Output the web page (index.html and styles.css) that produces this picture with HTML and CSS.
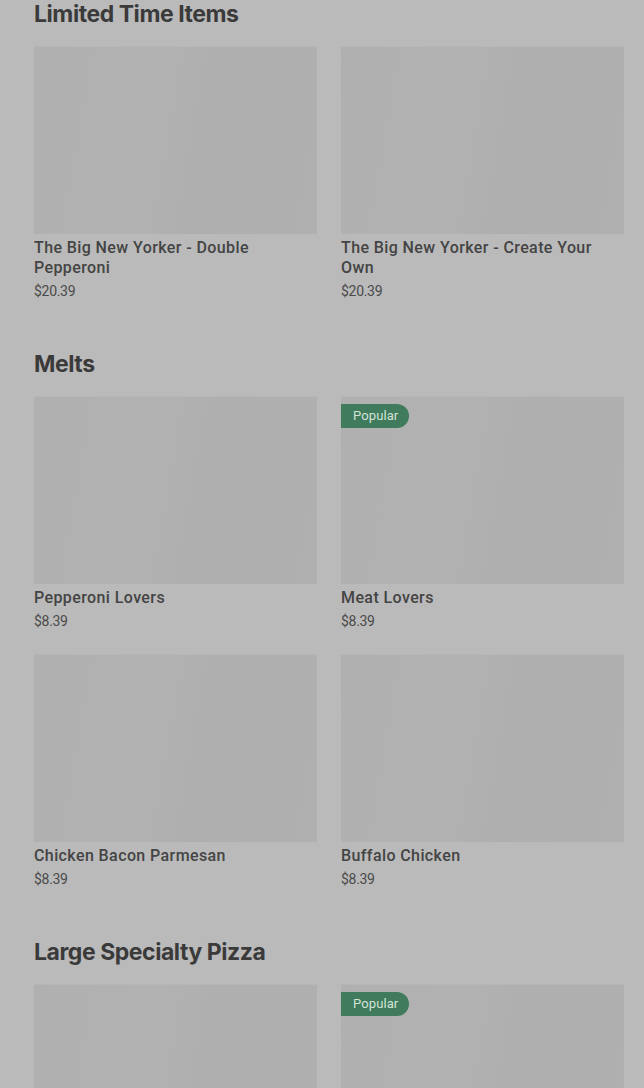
FILE: index.html
```html
<!DOCTYPE html>
<html>
<head>
<meta charset="utf-8">
<link rel="stylesheet" href="styles.css">
</head>
<body>
<main class="menu">
  <section class="section">
    <h2 class="section-title">Limited Time Items</h2>
    <div class="grid">
      <div class="card">
        <div class="thumb"></div>
        <div class="name">The Big New Yorker - Double Pepperoni</div>
        <div class="price">$20.39</div>
      </div>
      <div class="card">
        <div class="thumb"></div>
        <div class="name">The Big New Yorker - Create Your Own</div>
        <div class="price">$20.39</div>
      </div>
    </div>
  </section>
  <section class="section">
    <h2 class="section-title">Melts</h2>
    <div class="grid">
      <div class="card">
        <div class="thumb"></div>
        <div class="name">Pepperoni Lovers</div>
        <div class="price">$8.39</div>
      </div>
      <div class="card">
        <div class="thumb"><span class="badge">Popular</span></div>
        <div class="name">Meat Lovers</div>
        <div class="price">$8.39</div>
      </div>
      <div class="card">
        <div class="thumb"></div>
        <div class="name">Chicken Bacon Parmesan</div>
        <div class="price">$8.39</div>
      </div>
      <div class="card">
        <div class="thumb"></div>
        <div class="name">Buffalo Chicken</div>
        <div class="price">$8.39</div>
      </div>
    </div>
  </section>
  <section class="section">
    <h2 class="section-title">Large Specialty Pizza</h2>
    <div class="grid">
      <div class="card">
        <div class="thumb"></div>
      </div>
      <div class="card">
        <div class="thumb"><span class="badge">Popular</span></div>
      </div>
    </div>
  </section>
</main>
</body>
</html>
```
FILE: styles.css
```css
html, body {
  margin: 0;
  padding: 0;
  background: #bababa;
  overflow: hidden;
}
.menu {
  padding: 0 20px 0 34px;
  display: flex;
  flex-direction: column;
  gap: 49px;
}
.section-title {
  margin: 0 0 18px;
  font-family: Inter, "Liberation Sans", sans-serif;
  font-weight: 700;
  font-size: 23px;
  line-height: 28px;
  letter-spacing: -0.45px;
  color: #3a3a3a;
}
.grid {
  display: grid;
  grid-template-columns: 1fr 1fr;
  column-gap: 24px;
  row-gap: 23px;
}
.card {
  display: flex;
  flex-direction: column;
}
.thumb {
  position: relative;
  height: 188px;
  background: linear-gradient(100deg, #b0b0b0 0%, #b2b2b2 40%, #afafaf 60%, #b0b0b0 100%);
  border-top: 1px solid #b6b6b6;
  box-sizing: border-box;
  margin-bottom: 4px;
}
.badge {
  position: absolute;
  left: 0;
  top: 7px;
  height: 24px;
  padding: 0 11px 0 12px;
  border-radius: 0 12px 12px 0;
  background: #3f7b5c;
  color: #d3e3d8;
  font-family: Roboto, "Liberation Sans", sans-serif;
  font-size: 13px;
  line-height: 24px;
  letter-spacing: 0.1px;
}
.name {
  font-family: Roboto, "Liberation Sans", sans-serif;
  font-weight: 500;
  font-size: 16px;
  line-height: 20px;
  letter-spacing: 0.4px;
  color: #444;
}
.price {
  margin-top: 3px;
  font-family: Roboto, "Liberation Sans", sans-serif;
  font-size: 14px;
  line-height: 20px;
  color: #4a4a4a;
  letter-spacing: -0.3px;
}
```
